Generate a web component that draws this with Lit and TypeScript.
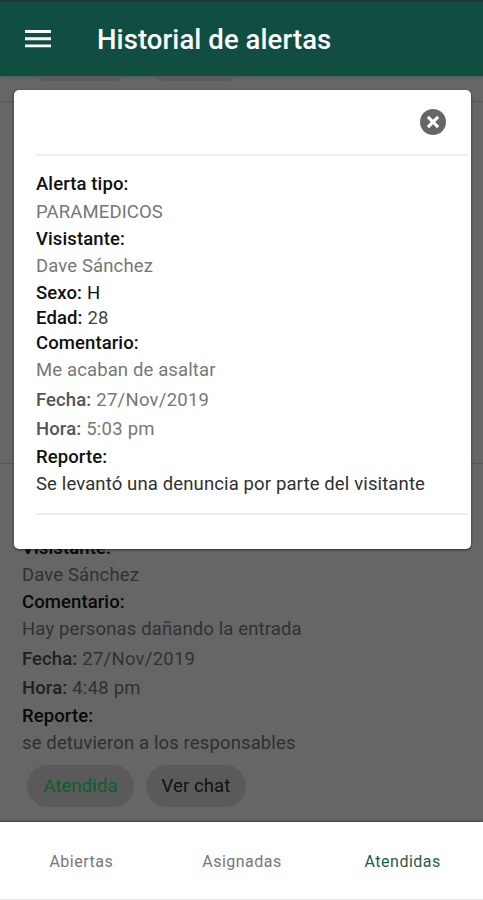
import { LitElement, html, css } from "lit";
import { customElement, property } from "lit/decorators.js";
import { classMap } from "lit/directives/class-map.js";

type Row = { kind: string; label?: string; value?: string };

const modalRows: Row[] = [
  { kind: "head", label: "Alerta tipo:" },
  { kind: "caps", value: "PARAMEDICOS" },
  { kind: "head", label: "Visistante:" },
  { kind: "text", value: "Dave Sánchez" },
  { kind: "sex", label: "Sexo:", value: "H" },
  { kind: "age", label: "Edad:", value: "28" },
  { kind: "mid", label: "Comentario:" },
  { kind: "text", value: "Me acaban de asaltar" },
  { kind: "date", label: "Fecha:", value: "27/Nov/2019" },
  { kind: "time", label: "Hora:", value: "5:03 pm" },
  { kind: "head", label: "Reporte:" },
  { kind: "report", value: "Se levantó una denuncia por parte del visitante" },
];

const listRows: Row[] = [
  { kind: "head", label: "Visistante:" },
  { kind: "text", value: "Dave Sánchez" },
  { kind: "mid", label: "Comentario:" },
  { kind: "text", value: "Hay personas dañando la entrada" },
  { kind: "date", label: "Fecha:", value: "27/Nov/2019" },
  { kind: "time", label: "Hora:", value: "4:48 pm" },
  { kind: "head", label: "Reporte:" },
  { kind: "report", value: "se detuvieron a los responsables" },
];

@customElement("alert-details")
class AlertDetails extends LitElement {
  @property({ attribute: false }) rows: Row[] = [];
  @property({ type: Boolean, reflect: true }) dimmed = false;

  static styles = css`
    :host {
      display: block;
      --strong: #101010;
      --soft: #777;
      --softlabel: #555;
      --report: #303030;
      font-size: 18.5px;
    }
    :host([dimmed]) {
      --strong: #080808;
      --soft: #313131;
      --softlabel: #202020;
      --report: #2f2f2f;
    }
    .row {
      display: flex;
      align-items: center;
      gap: 5px;
      height: 27px;
      white-space: nowrap;
      color: var(--soft);
      letter-spacing: 0.13px;
    }
    b { font-weight: 500; color: var(--strong); letter-spacing: 0.1px; }
    .head:first-child { height: 28px; }
    :host([dimmed]) .head:first-child { height: 27px; }
    .text, .time { height: 28px; }
    .date, .time { letter-spacing: 0.25px; }
    .sex { height: 26px; color: var(--strong); }
    .age { height: 24px; color: #444; }
    .mid { height: 26px; }
    .date { height: 31px; }
    .date b, .time b { color: var(--softlabel); }
    .report { color: var(--report); }
  `;

  render() {
    return this.rows.map(
      (r) => html`<div class="row ${r.kind}">
        ${r.label ? html`<b>${r.label}</b>` : ""}${r.value ? html`<span>${r.value}</span>` : ""}
      </div>`
    );
  }
}

@customElement("app-root")
class AppRoot extends LitElement {
  static styles = css`
    :host {
      display: flex;
      flex-direction: column;
      position: relative;
      width: 483px;
      height: 900px;
      overflow: hidden;
      background: #666;
      font-family: Roboto, "Liberation Sans", sans-serif;
    }
    header {
      box-sizing: border-box;
      flex: none;
      height: 76px;
      display: flex;
      align-items: center;
      gap: 46px;
      padding: 0 25px;
      background: #104e42;
      border-top: 2px solid #24342f;
      box-shadow: 0 1px 2px #4c5c58;
      color: #fff;
    }
    .menu { flex: none; width: 26px; height: 20px; }
    h1 { margin: 0; font-size: 27.5px; font-weight: 500; letter-spacing: 0.08px; white-space: nowrap; }
    main { flex: 1; display: flex; flex-direction: column; min-height: 0; }
    .previous {
      box-sizing: border-box;
      height: 26px;
      padding-left: 27px;
      display: flex;
      gap: 12px;
      overflow: hidden;
      border-bottom: 1px solid #575757;
    }
    .stub { width: 106px; height: 42px; margin-top: -37px; border-radius: 21px; background: #5b5b5b; }
    .stub + .stub { width: 100px; }
    .blank { height: 361px; border-bottom: 1px solid #575757; }
    .card { padding: 70px 22px 0; }
    .actions { display: flex; gap: 12px; padding: 9px 5px 0; }
    .pill {
      width: 107px;
      height: 42px;
      border-radius: 21px;
      background: #5a5a5a;
      display: grid;
      place-items: center;
      font-size: 18.5px;
      letter-spacing: 0.1px;
      color: #111;
    }
    .pill.done { color: #0b5f2e; }
    .pill.chat { width: 100px; }
    nav {
      box-sizing: border-box;
      flex: none;
      height: 78px;
      display: grid;
      grid-template-columns: repeat(3, 1fr);
      align-items: center;
      padding: 1px 0 0 1px;
      background: #fff;
      border-bottom: 1px solid #e8e8e8;
      box-shadow: 0 -1px 2px #444;
      font-size: 16px;
      letter-spacing: 0.5px;
      text-align: center;
      color: #777;
    }
    .active { color: #1d5c4b; }
    .modal {
      position: absolute;
      left: 14px;
      top: 90px;
      box-sizing: border-box;
      width: 457px;
      height: 459px;
      border-radius: 5px;
      background: #fff;
      box-shadow: 0 1px 3px rgba(0, 0, 0, 0.55);
      padding-left: 22px;
    }
    .top {
      height: 64px;
      display: flex;
      justify-content: flex-end;
      align-items: center;
      padding-right: 25px;
    }
    .close { width: 26px; height: 26px; }
    .rule { height: 2px; margin-right: 3px; background: #eee; }
    .modal alert-details { padding: 14px 0 16px; }
  `;

  render() {
    const tabs = ["Abiertas", "Asignadas", "Atendidas"];
    return html`
      <header>
        <svg class="menu" viewBox="0 0 26 20">
          <path d="M0 2.5H26M0 9.7H26M0 16.9H26" stroke="#fff" stroke-width="2.9" />
        </svg>
        <h1>Historial de alertas</h1>
      </header>
      <main>
        <div class="previous"><div class="stub"></div><div class="stub"></div></div>
        <div class="blank"></div>
        <section class="card">
          <alert-details dimmed .rows=${listRows}></alert-details>
          <div class="actions">
            <div class="pill done">Atendida</div>
            <div class="pill chat">Ver chat</div>
          </div>
        </section>
      </main>
      <nav>
        ${tabs.map((t) => html`<span class=${classMap({ active: t === "Atendidas" })}>${t}</span>`)}
      </nav>
      <div class="modal">
        <div class="top">
          <svg class="close" viewBox="0 0 26 26">
            <circle cx="13" cy="13" r="13" fill="#666" />
            <path d="M7.9 7.9L18.1 18.1M18.1 7.9L7.9 18.1" stroke="#fff" stroke-width="3" />
          </svg>
        </div>
        <div class="rule"></div>
        <alert-details .rows=${modalRows}></alert-details>
        <div class="rule"></div>
      </div>
    `;
  }
}
